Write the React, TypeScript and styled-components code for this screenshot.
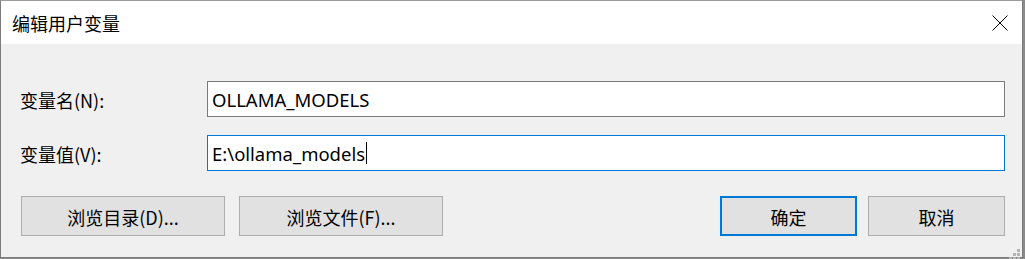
import React from "react";
import styled, { createGlobalStyle } from "styled-components";

const Global = createGlobalStyle`
  html, body { margin: 0; padding: 0; background: #8a8a8a; }
  body { width: 1025px; height: 259px; overflow: hidden; }
  #root { width: 1025px; height: 259px; }
  * { box-sizing: border-box; }
`;

const cjk = `"Noto Sans CJK SC", "Noto Sans", sans-serif`;

const Window = styled.div`
  position: relative;
  width: 1023px;
  height: 258px;
  background: #f0f0f0;
  border: 1px solid #7c7c7c;
  border-top-color: #9a9a9a;
  display: flex;
  flex-direction: column;
  font-family: ${cjk};
`;

const TitleBar = styled.div`
  height: 43px;
  background: #ffffff;
  display: flex;
  align-items: center;
  justify-content: space-between;
  padding: 0 14px 0 11px;
`;

const Title = styled.div`
  font-size: 18px;
  line-height: 1;
  color: #000;
  padding-top: 1px;
`;

const CloseButton = styled.div`
  width: 17px;
  height: 17px;
  display: flex;
  align-items: center;
  justify-content: center;
`;

const Body = styled.div`
  flex: 1;
  display: flex;
  flex-direction: column;
  padding: 37px 17px 0 19px;
`;

const Form = styled.div`
  display: grid;
  grid-template-columns: 187px 1fr;
  row-gap: 18px;
  align-items: center;
`;

const Label = styled.div`
  font-size: 18px;
  line-height: 1;
  color: #000;
  padding-top: 1px;
`;

const Field = styled.div<{ $focused?: boolean }>`
  height: 36px;
  background: #fff;
  border: 1px solid ${(p) => (p.$focused ? "#0078d7" : "#7a7a7a")};
  display: flex;
  align-items: center;
  padding-left: 4px;
  font-family: "Noto Sans", "Open Sans", sans-serif;
  font-size: 18.5px;
  color: #000;
  white-space: pre;
`;

const Caret = styled.span`
  display: inline-block;
  width: 1px;
  height: 22px;
  background: #000;
  margin-left: 1px;
`;

const ButtonRow = styled.div`
  margin-top: 25px;
  padding-left: 1px;
  display: flex;
  align-items: center;
`;

const Group = styled.div<{ $gap: number }>`
  display: flex;
  gap: ${(p) => p.$gap}px;
`;

const Spacer = styled.div`
  flex: 1;
`;

const Button = styled.div<{ $w: number; $default?: boolean }>`
  width: ${(p) => p.$w}px;
  height: 40px;
  background: #e1e1e1;
  border: ${(p) => (p.$default ? "2px solid #0078d7" : "1px solid #adadad")};
  display: flex;
  align-items: center;
  justify-content: center;
  font-size: 18px;
  line-height: 1;
  color: #000;
  padding-top: 1px;
`;

const Grip = styled.div`
  position: absolute;
  right: 1px;
  bottom: 1px;
  width: 14px;
  height: 14px;
`;

export default function App() {
  return (
    <>
      <Global />
      <Window>
        <TitleBar>
          <Title>编辑用户变量</Title>
          <CloseButton>
            <svg width="16" height="16" viewBox="0 0 16 16">
              <path d="M0.5 0.5 L15.5 15.5 M15.5 0.5 L0.5 15.5" stroke="#000" strokeWidth="1" fill="none" />
            </svg>
          </CloseButton>
        </TitleBar>
        <Body>
          <Form>
            <Label>变量名(N):</Label>
            <Field>OLLAMA_MODELS</Field>
            <Label>变量值(V):</Label>
            <Field $focused>
              E:\ollama_models
              <Caret />
            </Field>
          </Form>
          <ButtonRow>
            <Group $gap={14}>
              <Button $w={204}>浏览目录(D)...</Button>
              <Button $w={204}>浏览文件(F)...</Button>
            </Group>
            <Spacer />
            <Group $gap={11}>
              <Button $w={137} $default>确定</Button>
              <Button $w={137}>取消</Button>
            </Group>
          </ButtonRow>
        </Body>
        <Grip>
          <svg width="14" height="14" viewBox="0 0 14 14">
            <g fill="#b4b4b4">
              <rect x="10" y="2" width="3" height="3" />
              <rect x="6" y="6" width="3" height="3" />
              <rect x="10" y="6" width="3" height="3" />
              <rect x="2" y="10" width="3" height="3" />
              <rect x="6" y="10" width="3" height="3" />
              <rect x="10" y="10" width="3" height="3" />
            </g>
          </svg>
        </Grip>
      </Window>
    </>
  );
}
